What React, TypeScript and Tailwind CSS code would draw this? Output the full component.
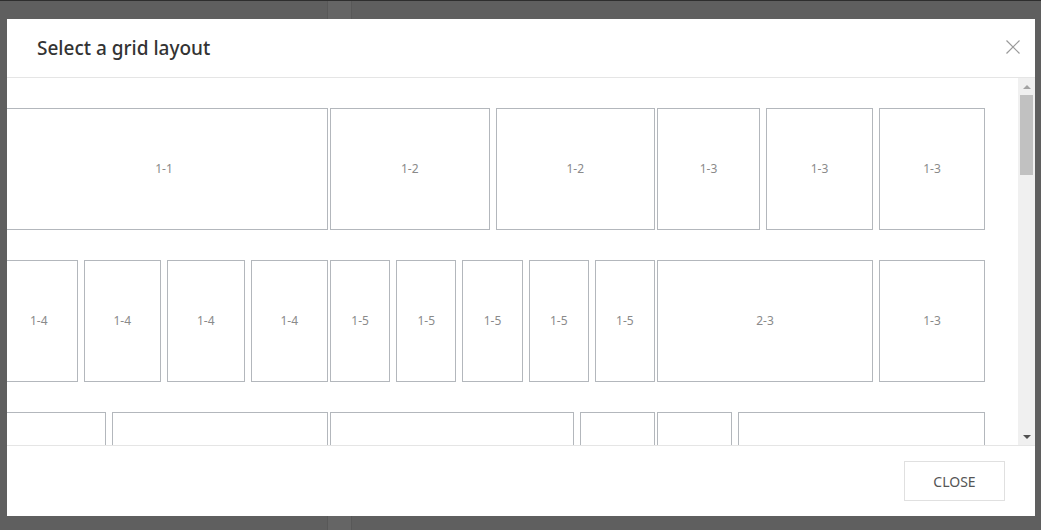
import React from 'react';

type Cell = { label: string; size: string };

// each row holds three groups side by side, each group a strip of cells
const rows: Cell[][][] = [
  [
    [{ label: '1-1', size: 'flex-1' }],
    [
      { label: '1-2', size: 'flex-1' },
      { label: '1-2', size: 'flex-1' },
    ],
    [
      { label: '1-3', size: 'w-[103px] shrink-0' },
      { label: '1-3', size: 'flex-1' },
      { label: '1-3', size: 'w-[106px] shrink-0' },
    ],
  ],
  [
    [
      { label: '1-4', size: 'flex-1' },
      { label: '1-4', size: 'flex-1' },
      { label: '1-4', size: 'flex-1' },
      { label: '1-4', size: 'flex-1' },
    ],
    [
      { label: '1-5', size: 'flex-1' },
      { label: '1-5', size: 'flex-1' },
      { label: '1-5', size: 'flex-1' },
      { label: '1-5', size: 'flex-1' },
      { label: '1-5', size: 'flex-1' },
    ],
    [
      { label: '2-3', size: 'flex-1' },
      { label: '1-3', size: 'w-[106px] shrink-0' },
    ],
  ],
  // third row is cut by the footer, its labels sit below the fold
  [
    [
      { label: '', size: 'w-[106px] shrink-0' },
      { label: '', size: 'flex-1' },
    ],
    [
      { label: '', size: 'flex-1' },
      { label: '', size: 'w-[75px] shrink-0' },
    ],
    [
      { label: '', size: 'w-[75px] shrink-0' },
      { label: '', size: 'flex-1' },
    ],
  ],
];

const groupWidths = ['w-[328px]', 'w-[325px]', 'w-[328px]'];

const App: React.FC = () => {
  return (
    <div className="relative h-[530px] w-[1041px] overflow-hidden bg-[#5f5f5f] font-['Noto_Sans',sans-serif]">
      {/* page behind the backdrop */}
      <div className="flex h-full border-t border-[#2e2e2e]">
        <div className="w-[327px]" />
        <div className="w-[25px] border-x border-[#585858] bg-[#656565]" />
      </div>

      {/* modal */}
      <div className="absolute left-[7px] top-[19px] flex h-[497px] w-[1028px] flex-col bg-white">
        <div className="flex h-[59px] shrink-0 items-center justify-between border-b border-[#e5e5e5] pl-[30px] pr-[14px]">
          <h2 className="text-[19px] font-medium text-[#333]">Select a grid layout</h2>
          <svg width="16" height="16" viewBox="0 0 16 16" className="mb-[2px]">
            <path d="M1.5 1.5 L14.5 14.5 M14.5 1.5 L1.5 14.5" stroke="#9a9a9a" strokeWidth="1.2" fill="none" />
          </svg>
        </div>

        <div className="flex min-h-0 flex-1">
          <div className="min-w-0 flex-1 overflow-hidden">
            <div className="-ml-[7px] flex flex-col gap-[30px] pt-[30px]">
              {rows.map((row, ri) => (
                <div key={ri} className="flex gap-[2px]">
                  {row.map((group, gi) => (
                    <div key={gi} className={`${groupWidths[gi]} flex shrink-0 gap-[6px]`}>
                      {group.map((c, ci) => (
                        <div
                          key={ci}
                          className={`${c.size} flex h-[122px] items-center justify-center border border-[#b3b7bc] text-[12px] text-[#8a8a8a]`}
                        >
                          {c.label}
                        </div>
                      ))}
                    </div>
                  ))}
                </div>
              ))}
            </div>
          </div>

          {/* scrollbar */}
          <div className="flex w-[17px] shrink-0 flex-col items-center bg-[#f0f0f0]">
            <div className="flex h-[17px] w-full items-center justify-center">
              <div className="h-0 w-0 border-x-[4px] border-b-[4px] border-x-transparent border-b-[#a3a3a3]" />
            </div>
            <div className="h-[80px] w-[13px] bg-[#c1c1c1]" />
            <div className="flex-1" />
            <div className="flex h-[17px] w-full items-center justify-center">
              <div className="h-0 w-0 border-x-[4px] border-t-[4px] border-x-transparent border-t-[#505050]" />
            </div>
          </div>
        </div>

        <div className="flex h-[71px] shrink-0 items-center justify-end border-t border-[#e5e5e5] pr-[30px]">
          <button className="h-[40px] w-[101px] border border-[#e0e0e0] bg-white text-[14px] text-[#555]">
            CLOSE
          </button>
        </div>
      </div>
    </div>
  );
};

export default App;
